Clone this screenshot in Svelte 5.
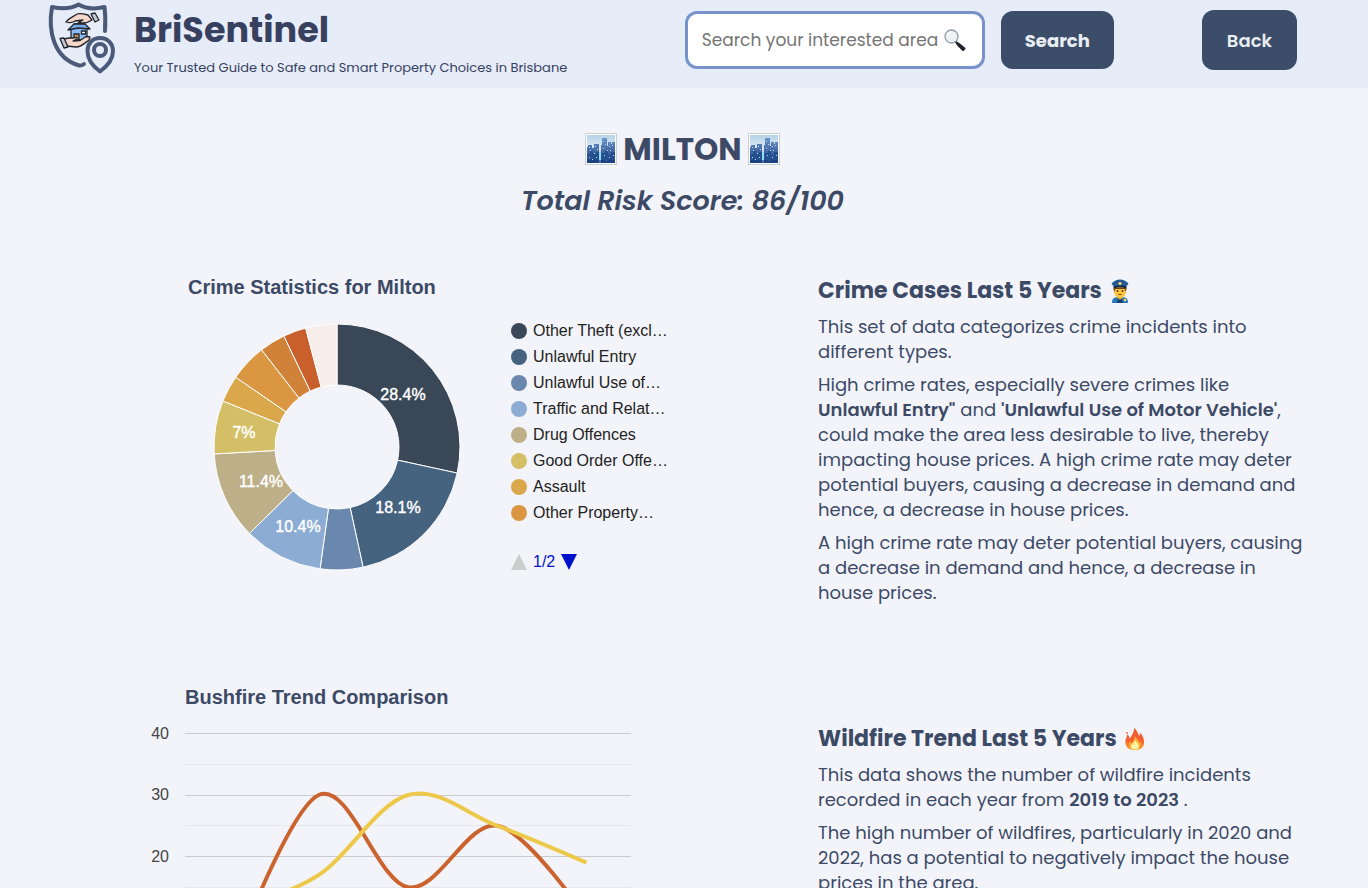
<script>
  const slices = [
    { value: 28.4, color: '#3a4757', label: '28.4%', lx: 190, ly: 77 },
    { value: 18.2, color: '#45627e', label: '18.1%', lx: 185, ly: 190 },
    { value: 5.6, color: '#6a88ad' },
    { value: 10.4, color: '#8dacd4', label: '10.4%', lx: 85, ly: 209 },
    { value: 11.5, color: '#bdb088', label: '11.4%', lx: 48, ly: 164 },
    { value: 7, color: '#d4bf66', label: '7%', lx: 31, ly: 115 },
    { value: 3.5, color: '#daa84a' },
    { value: 4.9, color: '#da9640' },
    { value: 3.4, color: '#cf8238' },
    { value: 3, color: '#c9602c' },
    { value: 4.1, color: '#f7eeec' }
  ];

  const legend = [
    'Other Theft (excl…',
    'Unlawful Entry',
    'Unlawful Use of…',
    'Traffic and Relat…',
    'Drug Offences',
    'Good Order Offe…',
    'Assault',
    'Other Property…'
  ];

  const center = 124;
  const outer = 123;
  const inner = 62;

  function at(radius, fraction) {
    const a = fraction * 2 * Math.PI;
    return `${(center + radius * Math.sin(a)).toFixed(2)} ${(center - radius * Math.cos(a)).toFixed(2)}`;
  }

  const total = slices.reduce((sum, s) => sum + s.value, 0);
  let sum = 0;
  const arcs = slices.map((s) => {
    const from = sum / total;
    sum += s.value;
    const to = sum / total;
    return {
      ...s,
      d: `M${at(outer, from)}A${outer} ${outer} 0 0 1 ${at(outer, to)}L${at(inner, to)}A${inner} ${inner} 0 0 0 ${at(inner, from)}Z`
    };
  });

  const yOf = (v) => 15.5 + (40 - v) * 6.15;
  const xOf = (i) => 89.6 + i * 89.2;

  function smooth(values) {
    const p = values.map((v, i) => [xOf(i), yOf(v)]);
    const k = 0.17;
    let d = `M${p[0][0]} ${p[0][1]}`;
    for (let i = 1; i < p.length; i++) {
      const a = p[i - 1];
      const b = p[i];
      const before = p[i - 2];
      const after = p[i + 1];
      const c1 = before ? [a[0] + k * (b[0] - before[0]), a[1] + k * (b[1] - before[1])] : a;
      const c2 = after ? [b[0] - k * (after[0] - a[0]), b[1] - k * (after[1] - a[1])] : b;
      d += `C${c1[0]} ${c1[1]} ${c2[0]} ${c2[1]} ${b[0]} ${b[1]}`;
    }
    return d;
  }

  const series = [
    { color: '#cb632e', d: smooth([2, 30, 15, 25, 10]) },
    { color: '#edc94a', d: smooth([11, 17, 30, 25, 19]) }
  ];
</script>

{#snippet city()}
  <svg class="city" viewBox="0 0 32 32" aria-hidden="true">
    <defs>
      <linearGradient id="sky" x1="0" y1="0" x2="0" y2="1">
        <stop offset="0" stop-color="#b5d3e6" />
        <stop offset="0.5" stop-color="#dcebf5" />
        <stop offset="1" stop-color="#3a7fc0" />
      </linearGradient>
      <linearGradient id="tower" x1="0" y1="0" x2="0" y2="1">
        <stop offset="0" stop-color="#6b93cb" />
        <stop offset="0.6" stop-color="#3d63a0" />
        <stop offset="1" stop-color="#173a78" />
      </linearGradient>
    </defs>
    <rect x="0.5" y="0.5" width="31" height="31" fill="#fff" stroke="#c9d0d3" />
    <rect x="2" y="2" width="28" height="28" fill="url(#sky)" />
    <path d="M2 14h1v-2h4v3h2v-4h5v19H2zM16 12h1V5h5v8h1V9h3v2h1V9h3v21H16z" fill="url(#tower)" />
    <path d="M2 21h3v-3h3v3h3v-2h3v11H2zM17 20h3v-2h3v4h3v-3h4v11H17z" fill="#24508f" />
    <path d="M14 19h2v11h-2z" fill="#8eddf5" />
    <path d="M4 14h1v1H4zM5 17h1v1H5zM10 13h1v1h-1zM12 16h1v1h-1zM9 20h1v1H9zM4 24h1v1H4zM7 26h1v1H7zM11 24h1v1h-1zM18 8h1v1h-1zM20 11h1v1h-1zM18 15h1v1h-1zM24 13h1v1h-1zM27 12h1v1h-1zM25 17h1v1h-1zM22 17h1v1h-1zM19 22h1v1h-1zM24 24h1v1h-1zM28 22h1v1h-1zM21 27h1v1h-1z" fill="#b9d7f4" />
    <path d="M2 27h28v3H2z" fill="#153b7c" opacity="0.6" />
  </svg>
{/snippet}

<header>
  <div class="brand">
    <svg class="logo" viewBox="0 0 72 76" aria-hidden="true">
      <g fill="none" stroke="#4a5a78" stroke-width="4" stroke-linecap="round" stroke-linejoin="round">
        <path d="M59 31c.500-8 .500-16-.500-24C50 9 40 9 32.500 4.500 25 9 15 9 6 7 2 30 7 58 33 65.500c2 .500 3 0 5-1.500" />
        <path d="M54 38c-8 0-12.500 6-12.500 13 0 8 5 15 12.500 20.500C61.500 66 67 59 67 51 67 44 62 38 54 38z" />
        <circle cx="54" cy="50" r="6" />
      </g>
      <g stroke="#20242c" stroke-width="1.300" stroke-linejoin="round">
        <path d="M25 29v11h16V29l-2-5H28z" fill="#8bbcf5" />
        <path d="M22 30l6-6h11l5 5-12-1z" fill="#76a9e6" />
        <path d="M28 40v-6h5v6z" fill="#d5954d" />
        <path d="M35.500 31h4v3h-4z" fill="#fff" />
        <path d="M20 22c3-4 7-5 11-8 3-1 7 0 11 1l4 5c-3 2-6 3-9 3h-5l5-3-8 1c-3 2-6 2-9 1z" fill="#f6d8ca" />
        <path d="M45 14l4-1 4 7-4 2z" fill="#c3c8d2" />
        <path d="M23 38l-5 1 3 7 9 1c5 0 9-4 13-7l1-3-4-.500-6 4-7 .500 4-2c1-2-1-2-3-1z" fill="#f6d8ca" />
        <path d="M14 38.500l4-.500 4 9-4 1z" fill="#c3c8d2" />
      </g>
    </svg>
    <div class="words">
      <p class="name">BriSentinel</p>
      <p class="tagline">Your Trusted Guide to Safe and Smart Property Choices in Brisbane</p>
    </div>
  </div>
  <form class="search" onsubmit={(e) => e.preventDefault()}>
    <div class="field">
      <input type="text" aria-label="Search your interested area" placeholder="Search your interested area" />
      <svg class="glass" viewBox="0 0 22 22" aria-hidden="true">
        <path d="M12 13l3 2 5.500 4.500-1.500 1.500-5-5z" stroke="#20242a" stroke-width="2" stroke-linejoin="round" fill="#333a42" />
        <circle cx="7.500" cy="7.500" r="6.500" fill="#edf2f5" stroke="#8d9aa5" stroke-width="1.300" />
        <path d="M3.500 7a4 4 0 0 1 4-4" stroke="#fff" stroke-width="1.500" fill="none" />
      </svg>
    </div>
    <button type="submit">Search</button>
  </form>
  <button class="back" type="button">Back</button>
</header>

<main>
  <div class="summary">
    <h1>{@render city()}<span>MILTON</span>{@render city()}</h1>
    <p class="score">Total Risk Score: 86/100</p>
  </div>

  <section class="crime">
    <div class="chart">
      <h3>Crime Statistics for Milton</h3>
      <div class="pie">
        <svg class="donut" viewBox="0 0 248 248" role="img" aria-label="Crime Statistics for Milton">
          {#each arcs as arc}
            <path d={arc.d} fill={arc.color} stroke="#fff" stroke-width="1" />
          {/each}
          {#each arcs as arc}
            {#if arc.label}
              <text x={arc.lx} y={arc.ly}>{arc.label}</text>
            {/if}
          {/each}
        </svg>
        <div>
          <ul>
            {#each legend as item, i}
              <li><span class="dot" style:background={slices[i].color}></span>{item}</li>
            {/each}
          </ul>
          <div class="pager">
            <button type="button" aria-label="Previous" disabled>
              <svg viewBox="0 0 16 16"><path d="M0 16L8 0l8 16z" fill="#ccc" /></svg>
            </button>
            <span>1/2</span>
            <button type="button" aria-label="Next">
              <svg viewBox="0 0 16 16"><path d="M0 0h16L8 16z" fill="#0011cc" /></svg>
            </button>
          </div>
        </div>
      </div>
    </div>
    <article>
      <h2>
        Crime Cases Last 5 Years
        <svg class="emoji" viewBox="0 0 24 24" aria-hidden="true">
          <path d="M4 24c0-5 2-6 8-6s8 1 8 6z" fill="#2876bd" />
          <path d="M9 16h6v3l-3 3-3-3z" fill="#e9a92d" />
          <path d="M10 19l2 2 2-2 1 5H9z" fill="#15406e" />
          <ellipse cx="12" cy="12" rx="6" ry="7" fill="#fcc53b" />
          <path d="M5.500 9h13l-.500 4-1.500-3H7.500L6 13z" fill="#70451c" />
          <path d="M3.500 4.500C6 2 9 .500 12 .500s6 1.500 8.500 4L18 8c-4-1-8-1-12 0z" fill="#245a98" />
          <path d="M5.500 7.500c4-1.500 9-1.500 13 0v2c-4-1.500-9-1.500-13 0z" fill="#172a40" />
          <circle cx="12" cy="4.500" r="1.500" fill="#ffe05d" />
          <circle cx="9.500" cy="12" r="1" fill="#5b3819" />
          <circle cx="14.500" cy="12" r="1" fill="#5b3819" />
          <path d="M10 15.500h4" stroke="#a05b18" />
          <circle cx="17" cy="21" r="1.300" fill="#ffe05d" />
        </svg>
      </h2>
      <p>This set of data categorizes crime incidents into different types.</p>
      <p>
        High crime rates, especially severe crimes like <b>Unlawful Entry"</b> and
        <b>'Unlawful Use of Motor Vehicle'</b>, could make the area less desirable to live, thereby
        impacting house prices. A high crime rate may deter potential buyers, causing a decrease in
        demand and hence, a decrease in house prices.
      </p>
      <p>
        A high crime rate may deter potential buyers, causing a decrease in demand and hence, a
        decrease in house prices.
      </p>
    </article>
  </section>

  <section class="fire">
    <div class="chart">
      <h3>Bushfire Trend Comparison</h3>
      <svg class="trend" viewBox="0 0 496 275" role="img" aria-label="Bushfire Trend Comparison">
        {#each [35, 25, 15, 5] as v}
          <rect x="45" y={Math.round(yOf(v) - 0.5)} width="446" height="1" fill="#e7e8ec" />
        {/each}
        {#each [40, 30, 20, 10, 0] as v}
          <rect x="45" y={Math.round(yOf(v) - 0.5)} width="446" height="1" fill="#cacbce" />
          <text x="29" y={Math.round(yOf(v) + 5)}>{v}</text>
        {/each}
        {#each series as s}
          <path d={s.d} fill="none" stroke={s.color} stroke-width="4" />
        {/each}
      </svg>
    </div>
    <article>
      <h2>
        Wildfire Trend Last 5 Years
        <svg class="emoji" viewBox="0 0 24 24" aria-hidden="true">
          <defs>
            <linearGradient id="flame" x1="0" y1="0" x2="0" y2="1">
              <stop offset="0" stop-color="#ee5530" />
              <stop offset="0.600" stop-color="#f3622d" />
              <stop offset="1" stop-color="#fba92e" />
            </linearGradient>
          </defs>
          <path d="M11.500 0c0 2 4 5 4.500 9 1-1 1.200-2 1-3.500 3 3 4.500 7 4 11C20.500 21 17 23 12 23c-5.500 0-9-2-9.500-7C2 12 4 11 4 7.500c2 1 2.500 2.500 2.500 4C9.500 9 11 4 11.500 0z" fill="url(#flame)" />
          <path d="M12 9c1 3 4 4 4.500 7 .500-.500 1-1 1-2 1 4-1 8.500-5.500 8.500S5.500 19 6.500 14.500c1 1 1 1 1.500 2C10 15 12 12 12 9z" fill="#fdb43b" />
          <path d="M12 13c.500 2 4 4 4 6.500 0 2-1.500 3-4 3s-4-1-4-3c0-2 3.500-3.500 4-6.500z" fill="#fff2a0" />
          <circle cx="4" cy="6" r="1" fill="#ee6b48" />
        </svg>
      </h2>
      <p>
        This data shows the number of wildfire incidents recorded in each year from
        <b>2019 to 2023</b> .
      </p>
      <p>
        The high number of wildfires, particularly in 2020 and 2022, has a potential to negatively
        impact the house prices in the area.
      </p>
    </article>
  </section>
</main>

<style>
  :global(body) {
    margin: 0;
    background: #f3f4fa;
    color: #3c4a66;
    font-family: Poppins, Inter, sans-serif;
  }

  p,
  h1,
  h2,
  h3,
  ul {
    margin: 0;
    padding: 0;
  }

  header {
    display: flex;
    align-items: center;
    box-sizing: border-box;
    height: 88px;
    padding: 0 71px 8px 46px;
    background: #e6ecf8;
  }

  .brand {
    display: flex;
    align-items: center;
    gap: 16px;
    margin-right: auto;
    color: #37415f;
  }

  .logo {
    width: 72px;
    height: 76px;
    margin-bottom: 4px;
  }

  .words {
    padding-top: 4px;
  }

  .name {
    font-size: 35px;
    line-height: 48px;
    font-weight: 700;
  }

  .tagline {
    font-size: 13px;
    line-height: 20px;
    margin-top: 4px;
  }

  .search {
    display: flex;
    gap: 16px;
    margin-right: 88px;
  }

  .field {
    position: relative;
    display: flex;
  }

  input {
    box-sizing: border-box;
    width: 300px;
    height: 58px;
    padding: 0 40px 0 14px;
    border: 3px solid #7893cb;
    border-radius: 12px;
    background: #fff;
    font: 17px Poppins, Inter, sans-serif;
    color: #3c4a66;
  }

  input::placeholder {
    color: #757575;
    opacity: 1;
  }

  .glass {
    position: absolute;
    right: 19px;
    top: 18px;
    width: 22px;
    height: 22px;
  }

  header button {
    height: 58px;
    padding: 0 25px;
    border: 0;
    border-radius: 12px;
    background: #3b4d68;
    color: #e9edf2;
    font: 700 18px Poppins, Inter, sans-serif;
  }

  .search button {
    padding: 0 24px;
  }

  header .back {
    height: 60px;
    font-weight: 600;
  }

  .summary {
    padding: 40px 3px 0 0;
    text-align: center;
  }

  h1 {
    display: flex;
    justify-content: center;
    align-items: center;
    gap: 6px;
    font-size: 31px;
    line-height: 42px;
    font-weight: 700;
  }

  .city {
    width: 32px;
    height: 32px;
  }

  .score {
    margin-top: 10px;
    font-size: 27px;
    line-height: 42px;
    font-weight: 600;
    font-style: italic;
  }

  section {
    display: grid;
    grid-template-columns: minmax(0, 1fr) minmax(0, 490px);
    padding: 0 60px 0 140px;
  }

  .crime {
    margin-top: 53px;
  }

  .fire {
    margin-top: 80px;
  }

  h3 {
    font: 700 20px/24px 'Liberation Sans', Arial, sans-serif;
  }

  .crime .chart {
    padding-left: 48px;
  }

  .fire h3 {
    padding-left: 45px;
  }

  .pie {
    display: flex;
    gap: 50px;
    margin: 24px 0 0 25px;
  }

  .donut {
    width: 248px;
    height: 248px;
  }

  text {
    font: 16px 'Liberation Sans', Arial, sans-serif;
    fill: #444;
    text-anchor: end;
  }

  .donut text {
    fill: #fff;
    stroke: #fff;
    stroke-width: 0.4px;
    text-anchor: middle;
  }

  ul {
    list-style: none;
    margin-top: -5px;
  }

  li {
    display: flex;
    align-items: center;
    gap: 6px;
    height: 26px;
    font: 16px 'Liberation Sans', Arial, sans-serif;
    color: #222;
    white-space: nowrap;
  }

  .dot {
    width: 16px;
    height: 16px;
    border-radius: 50%;
  }

  .pager {
    display: flex;
    align-items: center;
    gap: 6px;
    margin-top: 27px;
    font: 16px 'Liberation Sans', Arial, sans-serif;
    color: #0011cc;
  }

  .pager button {
    display: flex;
    padding: 0;
    border: 0;
    background: none;
  }

  .pager svg {
    width: 16px;
    height: 16px;
  }

  .trend {
    display: block;
    width: 496px;
    height: 275px;
    margin-top: 9px;
  }

  .fire article {
    padding-top: 38px;
  }

  h2 {
    display: flex;
    align-items: center;
    gap: 6px;
    font-size: 22px;
    line-height: 32px;
    font-weight: 700;
  }

  .emoji {
    width: 24px;
    height: 24px;
  }

  article p {
    margin-top: 8px;
    font-size: 18px;
    line-height: 25px;
  }

  h2 + p {
    margin-top: 7px;
  }

  b {
    font-weight: 600;
  }
</style>
